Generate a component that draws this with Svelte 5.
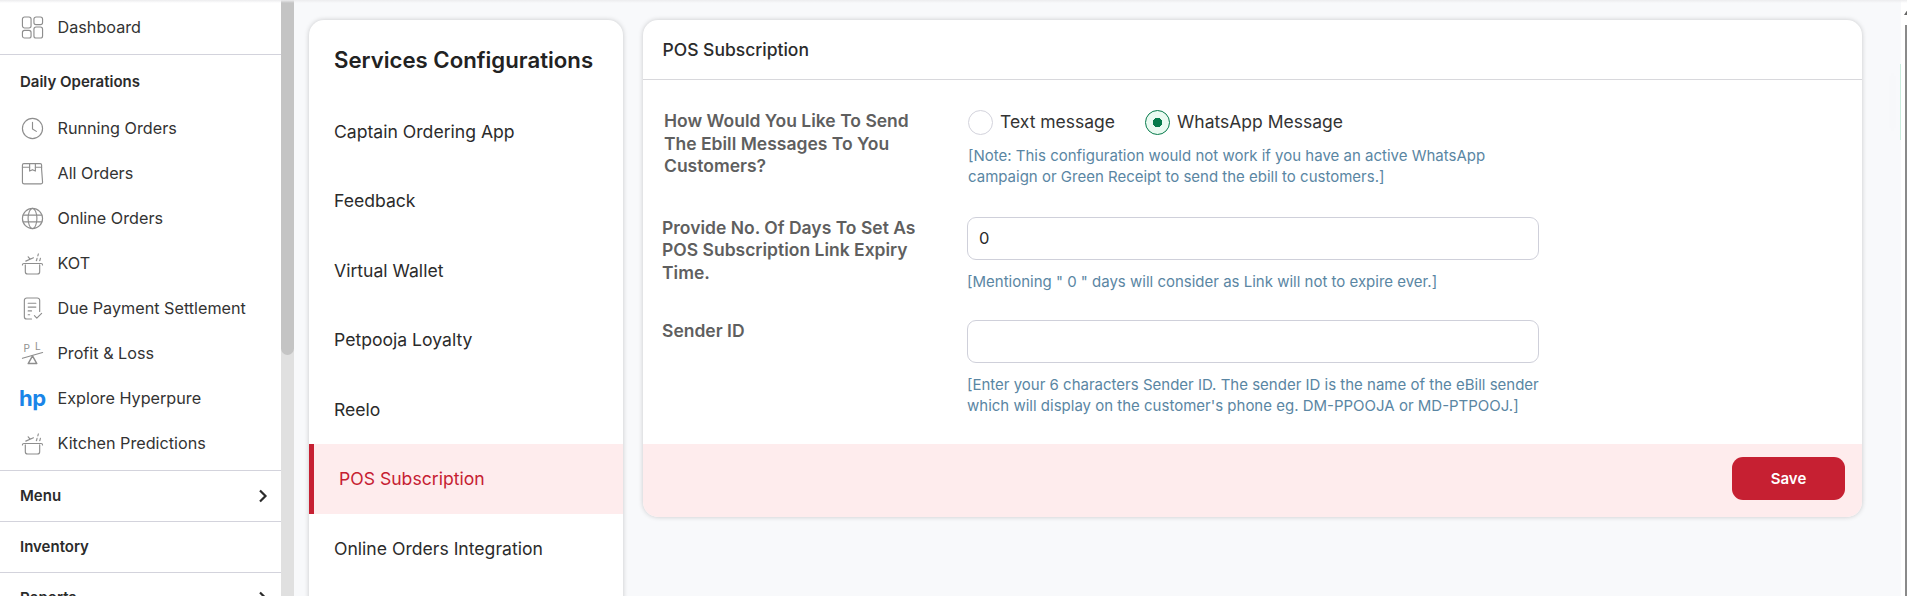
<script>
	const dailyOps = [
		{ id: "clock", label: "Running Orders" },
		{ id: "bag", label: "All Orders" },
		{ id: "globe", label: "Online Orders" },
		{ id: "pot", label: "KOT" },
		{ id: "due", label: "Due Payment Settlement" },
		{ id: "scale", label: "Profit & Loss" },
		{ id: "hp", label: "Explore Hyperpure" },
		{ id: "pot", label: "Kitchen Predictions" },
	];

	const services = [
		"Captain Ordering App",
		"Feedback",
		"Virtual Wallet",
		"Petpooja Loyalty",
		"Reelo",
		"POS Subscription",
		"Online Orders Integration",
	];
	const activeService = "POS Subscription";
</script>

{#snippet icon(id)}
	{#if id === "hp"}
		<span class="hp">hp</span>
	{:else}
		<svg class="nav-icon" viewBox="0 0 24 24" fill="none" stroke="#8e8e8e" stroke-width="1.2" stroke-linecap="round" stroke-linejoin="round">
			{#if id === "grid"}
				<rect x="1.5" y="1" width="9" height="11.5" rx="2.2" />
				<rect x="13.5" y="1" width="9" height="8" rx="2.2" />
				<rect x="1.5" y="15" width="9" height="8" rx="2.2" />
				<rect x="13.5" y="11.5" width="9" height="11.5" rx="2.2" />
			{:else if id === "clock"}
				<circle cx="12" cy="12" r="10.5" />
				<path d="M12 5.5V12.5L16 15" />
			{:else if id === "bag"}
				<path d="M1.5 9V21a1.8 1.8 0 0 0 1.8 1.8h17.4a1.8 1.8 0 0 0 1.8-1.8L21.5 7.5V3.2A1.5 1.5 0 0 0 20 1.7H3A1.5 1.5 0 0 0 1.5 3.2V9Z" />
				<path d="M9 1.7V9.5L12 8l3 1.5V1.7" />
				<path d="M1.5 5.5H9M15 5.5H21.5" />
			{:else if id === "globe"}
				<circle cx="12" cy="12" r="10.5" />
				<ellipse cx="12" cy="12" rx="4.6" ry="10.5" />
				<path d="M2.2 8.5H21.8M2.2 15.5H21.8" />
			{:else if id === "pot"}
				<path d="M4.5 13.5V20.5a2.5 2.5 0 0 0 2.5 2.5H17a2.5 2.5 0 0 0 2.5-2.5V13.5" />
				<path d="M1.5 13.5a1.5 1.5 0 0 1 1.5-1.5H21a1.5 1.5 0 0 1 1.5 1.5" />
				<path d="M5 9.5L13 6M7.5 5l2 2.5" />
				<path d="M16 9c.8-1 .2-1.5.8-2.5M19.5 9c.8-1 .2-1.5.8-2.5M17.5 4c.6-.8.2-1.2.6-2" />
			{:else if id === "due"}
				<path d="M11 23H6a2.5 2.5 0 0 1-2.5-2.5V3.5A2.5 2.5 0 0 1 6 1h11a2.5 2.5 0 0 1 2.5 2.5V15" />
				<path d="M7.5 6.5H15.5M7.5 10.5H15.5M7.5 14.5H11M7.5 18.5H9" />
				<path d="M14 19.5l2.5 2.5 5-5" />
			{:else if id === "scale"}
				<text x="2.5" y="10" class="scale-letter">P</text>
				<text x="14.5" y="8" class="scale-letter">L</text>
				<path d="M1.5 17L22.5 11" />
				<path d="M12 14.5L7.5 22.5H16.5Z" stroke-width="1.5" />
			{/if}
		</svg>
	{/if}
{/snippet}

<div class="page">
	<aside class="sidebar">
		<nav class="nav">
			<a class="nav-item top" href="#dashboard">
				{@render icon("grid")}
				<span>Dashboard</span>
			</a>
			<section class="daily">
				<h3 class="group-title">Daily Operations</h3>
				<ul>
					{#each dailyOps as item (item.label)}
						<li>
							<a class="nav-item" href="#item">
								{@render icon(item.id)}
								<span>{item.label}</span>
							</a>
						</li>
					{/each}
				</ul>
			</section>
			<div class="group-row">
				<h3 class="group-title">Menu</h3>
				<svg class="chevron" viewBox="0 0 10 14" fill="none" stroke="#2b2b2b" stroke-width="2.2"><path d="M2 1.5L7.5 7L2 12.5" /></svg>
			</div>
			<div class="group-row">
				<h3 class="group-title">Inventory</h3>
			</div>
			<div class="group-row">
				<h3 class="group-title">Reports</h3>
				<svg class="chevron" viewBox="0 0 10 14" fill="none" stroke="#2b2b2b" stroke-width="2.2"><path d="M2 1.5L7.5 7L2 12.5" /></svg>
			</div>
		</nav>
		<div class="side-scroll"><div class="side-thumb"></div></div>
	</aside>

	<main class="content">
		<section class="card services">
			<h2 class="services-title">Services Configurations</h2>
			<ul>
				{#each services as service (service)}
					<li class={["service", service === activeService && "is-active"]}>{service}</li>
				{/each}
			</ul>
		</section>

		<section class="card config">
			<header class="config-head">POS Subscription</header>
			<div class="config-body">
				<div class="row row-first">
					<label class="field-label" for="msg-text">How Would You Like To Send The Ebill Messages To You Customers?</label>
					<div class="field">
						<div class="radios">
							<span class="radio-option">
								<span class="radio"></span>
								<span class="radio-text">Text message</span>
							</span>
							<span class="radio-option">
								<span class="radio is-on"></span>
								<span class="radio-text">WhatsApp Message</span>
							</span>
						</div>
						<p class="note">[Note: This configuration would not work if you have an active WhatsApp campaign or Green Receipt to send the ebill to customers.]</p>
					</div>
				</div>
				<div class="row row-next">
					<label class="field-label" for="days">Provide No. Of Days To Set As POS Subscription Link Expiry Time.</label>
					<div class="field">
						<input id="days" class="text-input" value="0" />
						<p class="note">[Mentioning " 0 " days will consider as Link will not to expire ever.]</p>
					</div>
				</div>
				<div class="row row-next">
					<label class="field-label" for="sender">Sender ID</label>
					<div class="field">
						<input id="sender" class="text-input" />
						<p class="note">[Enter your 6 characters Sender ID. The sender ID is the name of the eBill sender which will display on the customer's phone eg. DM-PPOOJA or MD-PTPOOJ.]</p>
					</div>
				</div>
			</div>
			<footer class="config-foot">
				<button class="save">Save</button>
			</footer>
		</section>
	</main>

	<div class="page-edge">
		<div class="edge-tab"></div>
		<div class="edge-arrow"></div>
		<div class="edge-bar"></div>
	</div>
</div>

<style>
	:global(body) {
		margin: 0;
		background: #f8f9fb;
		font-family: Inter, "Noto Sans", sans-serif;
		color: #2b2b2b;
	}

	ul {
		list-style: none;
		margin: 0;
		padding: 0;
	}

	.page {
		position: relative;
		display: flex;
		height: 596px;
		overflow: hidden;
	}

	.page::before {
		content: "";
		position: absolute;
		inset: 0 0 auto 0;
		height: 3px;
		background: linear-gradient(#ececee, transparent);
		z-index: 2;
	}

	.sidebar {
		display: flex;
		flex: none;
		width: 294px;
		height: 596px;
	}

	.nav {
		width: 281px;
		background: #fff;
	}

	.nav-item {
		display: flex;
		align-items: center;
		gap: 13.5px;
		height: 45px;
		padding-left: 21px;
		color: #333;
		font-size: 16.2px;
		text-decoration: none;
	}

	.nav-item.top {
		height: 54px;
		border-bottom: 1px solid #d3d3dc;
	}

	.nav-icon {
		flex: none;
		width: 23px;
		height: 23px;
		overflow: visible;
	}

	.scale-letter {
		font-family: Inter, sans-serif;
		font-size: 10.5px;
		fill: #8e8e8e;
		stroke: none;
	}

	.hp {
		flex: none;
		width: 25px;
		margin-left: -2px;
		color: #1a85e8;
		font-size: 22px;
		font-weight: 700;
		letter-spacing: -0.5px;
		line-height: 30px;
	}

	.group-title {
		margin: 0;
		font-size: 15px;
		font-weight: 600;
		color: #2b2b2b;
	}

	.daily {
		border-bottom: 1px solid #d3d3dc;
		padding-bottom: 4.5px;
	}

	.daily .group-title {
		padding: 18px 20px 15.5px;
		line-height: 17px;
	}

	.group-row {
		display: flex;
		align-items: center;
		justify-content: space-between;
		height: 50px;
		padding: 0 13px 0 20px;
		border-bottom: 1px solid #d3d3dc;
	}

	.group-row .group-title {
		margin-bottom: 2px;
	}

	.chevron {
		width: 10px;
		height: 14px;
	}

	.side-scroll {
		width: 13px;
		background: #e0e0e0;
	}

	.side-thumb {
		height: 355px;
		background: #c4c4c4;
		border-radius: 0 0 7px 7px;
	}

	.content {
		display: flex;
		flex: none;
		align-items: flex-start;
		gap: 20px;
		padding: 20px 0 0 15px;
	}

	.card {
		background: #fff;
		border-radius: 15px;
		box-shadow: 0 0 5px rgba(0, 0, 0, 0.2);
	}

	.services {
		width: 314px;
		height: 640px;
		overflow: hidden;
	}

	.services-title {
		margin: 0;
		padding: 25.5px 25px 0;
		height: 76.5px;
		box-sizing: border-box;
		font-size: 22.2px;
		line-height: 27px;
		font-weight: 600;
		color: #222;
		white-space: nowrap;
	}

	.service {
		display: flex;
		align-items: center;
		height: 69.5px;
		padding-left: 25px;
		font-size: 17.6px;
		color: #2b2b2b;
	}

	.service.is-active {
		padding-left: 25px;
		border-left: 5px solid #c62032;
		background: #feeced;
		color: #c62032;
	}

	.config {
		width: 1219px;
		height: 497px;
		display: flex;
		flex-direction: column;
		overflow: hidden;
	}

	.config-head {
		height: 60px;
		box-sizing: border-box;
		padding: 20px 20px 0 19.5px;
		border-bottom: 1px solid #d8d8dc;
		font-size: 17.5px;
		font-weight: 500;
		line-height: 20px;
		color: #2b2b2b;
	}

	.config-body {
		flex: 1;
	}

	.row {
		display: grid;
		grid-template-columns: 305px 572px;
		padding-left: 19px;
	}

	.row-first {
		grid-template-columns: 304px 572px;
		padding-top: 30px;
		padding-left: 21px;
	}

	.row-next {
		padding-top: 29.5px;
	}

	.row-next + .row-next {
		padding-top: 28.5px;
	}

	.field-label {
		width: 265px;
		font-size: 17.5px;
		font-weight: 600;
		line-height: 22.5px;
		color: #5f5f5f;
	}

	.radios {
		display: flex;
		align-items: center;
		gap: 30px;
		height: 25px;
	}

	.radio-option {
		display: flex;
		align-items: center;
		gap: 7px;
		font-size: 17.5px;
		color: #333;
	}

	.radio-text {
		margin-bottom: 2px;
	}

	.radio {
		box-sizing: border-box;
		width: 25px;
		height: 25px;
		border: 1px solid #d3d3dc;
		border-radius: 50%;
		background: #fff;
	}

	.radio.is-on {
		border: 1.5px solid #067a4b;
		background: radial-gradient(circle, #067a4b 0 4.5px, #eafaf1 5px);
	}

	.note {
		margin: 11px 0 0;
		font-size: 15px;
		line-height: 21px;
		color: #5a86a3;
	}

	.row-first .note {
		margin-top: 10px;
	}

	.text-input {
		display: block;
		box-sizing: border-box;
		width: 572px;
		height: 43px;
		padding: 0 11px;
		border: 1px solid #cfd0da;
		border-radius: 9px;
		background: #fff;
		font: 16.5px Inter, sans-serif;
		color: #2b2b2b;
		outline: none;
	}

	.config-foot {
		display: flex;
		align-items: center;
		justify-content: flex-end;
		height: 73px;
		box-sizing: border-box;
		padding: 0 17px 4px 0;
		background: #feeced;
	}

	.save {
		width: 113px;
		height: 43px;
		border: 0;
		border-radius: 11px;
		background: #c62032;
		color: #fff;
		font: 600 15px Inter, sans-serif;
	}

	.page-edge {
		position: absolute;
		top: 0;
		right: 0;
		bottom: 0;
		width: 6px;
		background: #fff;
	}

	.edge-tab {
		position: absolute;
		top: 64px;
		left: -1px;
		width: 1px;
		height: 76px;
		background: #c9ecdd;
		box-shadow: -8px 0 14px rgba(0, 0, 0, 0.07);
	}

	.edge-arrow {
		position: absolute;
		top: 9px;
		left: 3px;
		border-left: 4px solid transparent;
		border-right: 4px solid transparent;
		border-bottom: 6px solid #666;
	}

	.edge-bar {
		position: absolute;
		top: 25px;
		bottom: 0;
		left: 4px;
		width: 2px;
		background: #8a8a8a;
	}
</style>
